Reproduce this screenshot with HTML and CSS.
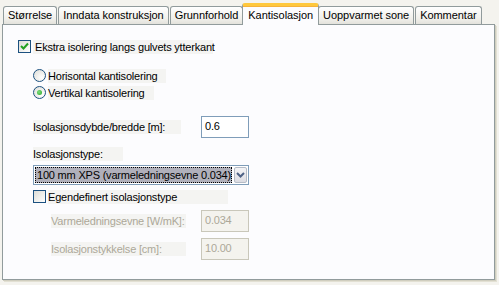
FILE: index.html
```html
<!DOCTYPE html>
<html lang="no">
<head>
    <meta charset="UTF-8">
    <title>Kantisolasjon</title>
    <link rel="stylesheet" href="styles.css">
</head>
<body>
    <div class="dialog">
        <div class="tabs">
            <div class="tab">Størrelse</div>
            <div class="tab">Inndata konstruksjon</div>
            <div class="tab">Grunnforhold</div>
            <div class="tab active">Kantisolasjon</div>
            <div class="tab">Uoppvarmet sone</div>
            <div class="tab">Kommentar</div>
        </div>

        <div class="panel">
            <div class="row check-row">
                <span class="checkbox checked">
                    <svg width="9" height="9" viewBox="0 0 9 9"><path d="M1 4 L3.5 6.5 L8 1.5" fill="none" stroke="#21a121" stroke-width="2"/></svg>
                </span>
                <span class="label lbl-extra">Ekstra isolering langs gulvets ytterkant</span>
            </div>

            <div class="radios">
                <div class="row radio-row">
                    <span class="radio"></span>
                    <span class="label lbl-hor">Horisontal kantisolering</span>
                </div>
                <div class="row radio-row">
                    <span class="radio selected"></span>
                    <span class="label lbl-ver">Vertikal kantisolering</span>
                </div>
            </div>

            <div class="row field">
                <span class="label field-label">Isolasjonsdybde/bredde [m]:</span>
                <div class="textbox">0.6</div>
            </div>

            <div class="label type-label">Isolasjonstype:</div>

            <div class="select">
                <div class="select-value"><span>100 mm XPS (varmeledningsevne 0.034)</span></div>
                <div class="select-btn">
                    <svg width="9" height="6" viewBox="0 0 9 6"><path d="M1 1 L4.5 4.5 L8 1" fill="none" stroke="#4d6185" stroke-width="2"/></svg>
                </div>
            </div>

            <div class="row check-row custom">
                <span class="checkbox"></span>
                <span class="label lbl-custom">Egendefinert isolasjonstype</span>
            </div>

            <div class="row field sub disabled">
                <span class="label field-label">Varmeledningsevne [W/mK]:</span>
                <div class="textbox">0.034</div>
            </div>
            <div class="row field sub disabled second">
                <span class="label field-label">Isolasjonstykkelse [cm]:</span>
                <div class="textbox">10.00</div>
            </div>
        </div>
    </div>
</body>
</html>
```

FILE: styles.css
```css
* {
    margin: 0;
    padding: 0;
    box-sizing: border-box;
}

body {
    font-family: Tahoma, 'Liberation Sans', Arial, sans-serif;
    font-size: 11px;
    letter-spacing: -0.2px;
    color: #000;
    background: #f4f3ee;
    width: 499px;
    height: 285px;
    overflow: hidden;
}

.dialog {
    padding: 3px 0 0 2px;
}

/* tab strip */
.tabs {
    display: flex;
    align-items: flex-end;
    height: 21px;
    padding-left: 1px;
    position: relative;
    z-index: 1;
    letter-spacing: -0.05px;
}

.tab {
    height: 18px;
    line-height: 16px;
    padding: 0 4px;
    margin-right: 1px;
    border: 1px solid #919b9c;
    border-bottom: none;
    border-radius: 3px 3px 0 0;
    background: linear-gradient(#ffffff, #f0efea 70%, #e3e2dc);
    white-space: nowrap;
}

.tab.active {
    height: 22px;
    margin: 0 -1px 0 -2px;
    padding: 0 5px;
    line-height: 18px;
    border-top: 3px solid #ffc83c;
    box-shadow: inset 0 1px 0 #f5b23a;
    background: #fcfcfe;
    position: relative;
    top: 1px;
}

/* page panel */
.panel {
    width: 493px;
    height: 256px;
    border: 1px solid #919b9c;
    background: #fcfcfe;
    box-shadow: 1px 1px 0 #d0cebf, 2px 2px 0 #e2e0d3;
    padding: 15px 0 0 15px;
}

.row {
    display: flex;
    align-items: center;
}

.label {
    background: #f4f4f2;
    white-space: nowrap;
}

/* checkboxes and radios */
.check-row {
    height: 13px;
}

.checkbox {
    width: 13px;
    height: 13px;
    border: 1px solid #1c5180;
    background: linear-gradient(135deg, #dcdcd6, #ffffff);
    display: flex;
    align-items: center;
    justify-content: center;
    margin-right: 2px;
}

.lbl-extra {
    width: 180px;
    line-height: 14px;
    padding-left: 2px;
}

.radios {
    margin: 16px 0 0 15px;
    display: flex;
    flex-direction: column;
    gap: 4px;
}

.radio-row {
    height: 13px;
}

.radio {
    width: 13px;
    height: 13px;
    border: 1px solid #1c5180;
    border-radius: 50%;
    background: radial-gradient(circle at 70% 70%, #ffffff, #dcdcd6);
    margin-right: 2px;
    position: relative;
}

.radio.selected::after {
    content: '';
    position: absolute;
    left: 3px;
    top: 3px;
    width: 5px;
    height: 5px;
    border-radius: 50%;
    background: radial-gradient(circle at 40% 40%, #7ee07e, #21a121);
}

.radio-row .label {
    line-height: 14px;
}

.lbl-hor {
    width: 118px;
}

.lbl-ver {
    width: 106px;
}

/* text fields */
.field {
    margin: 17px 0 0 15px;
}

.field-label {
    width: 148px;
    margin-right: 20px;
    line-height: 14px;
}

.textbox {
    width: 48px;
    height: 22px;
    border: 1px solid #7f9db9;
    background: #fff;
    padding: 3px 0 0 3px;
}

.type-label {
    margin: 9px 0 0 15px;
    width: 90px;
    line-height: 14px;
}

/* combo box */
.select {
    display: flex;
    width: 216px;
    height: 20px;
    margin: 4px 0 0 15px;
    border: 1px solid #7f9db9;
    background: #fff;
    padding: 1px;
}

.select-value {
    flex: 1;
    min-width: 0;
    padding-right: 2px;
}

.select-value span {
    display: block;
    height: 16px;
    line-height: 14px;
    border: 1px dotted #000;
    background: #b0b0bb;
    padding-left: 1px;
    white-space: nowrap;
    overflow: hidden;
}

.select-btn {
    width: 13px;
    height: 16px;
    border: 1px solid #b6bcc6;
    border-radius: 2px;
    background: linear-gradient(#f4f4f6, #dcdce2);
    display: flex;
    align-items: center;
    justify-content: center;
}

.custom {
    margin: 5px 0 0 15px;
}

.lbl-custom {
    width: 180px;
    line-height: 14px;
}

/* disabled fields */
.sub {
    margin: 7px 0 0 33px;
}

.sub.second {
    margin-top: 6px;
}

.sub .field-label {
    width: 135px;
    margin-right: 15px;
}

.disabled .label,
.disabled .textbox {
    color: #aca899;
}

.disabled .textbox {
    background: #f4f3ee;
    border-color: #c9c7ba;
}
```
